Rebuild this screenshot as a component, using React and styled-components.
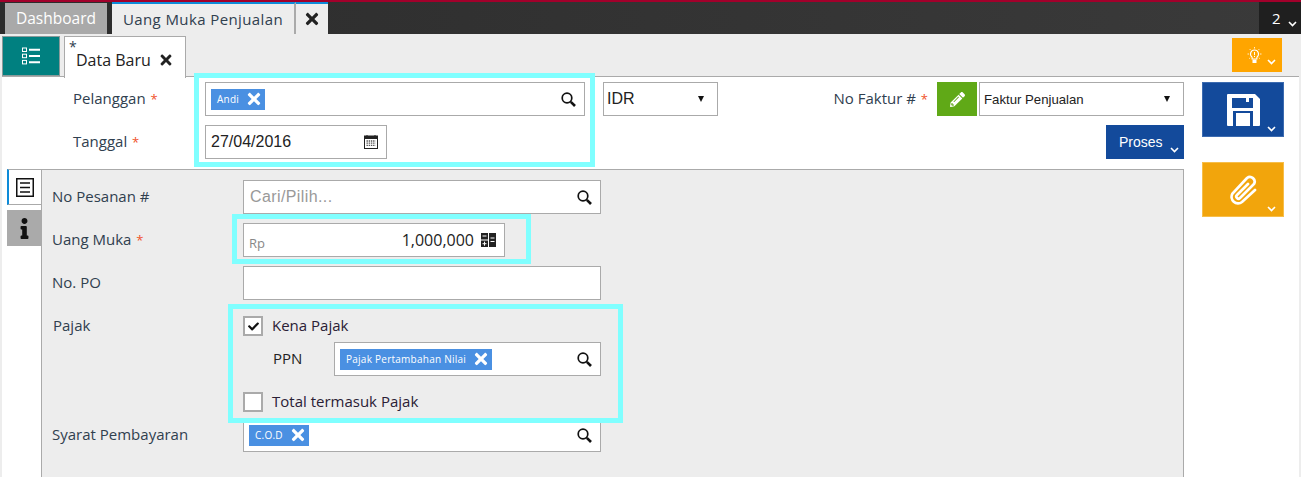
import styled, { createGlobalStyle } from "styled-components";
import { FaTimes, FaPencilAlt, FaInfo, FaCheck } from "react-icons/fa";

const Global = createGlobalStyle`
    html, body {
        margin: 0;
        padding: 0;
        overflow: hidden;
        background: #EDEDED;
    }
    * {
        box-sizing: border-box;
    }
`

const Chevron = ({ color = "#FFFFFF" }) => (
    <svg width="9" height="6" viewBox="0 0 9 6">
        <path d="M1 1 L4.5 4.5 L8 1" fill="none" stroke={color} strokeWidth="1.6" />
    </svg>
)

const SearchIcon = () => (
    <svg width="15" height="15" viewBox="0 0 15 15" fill="none" stroke="#111111">
        <circle cx="6" cy="6" r="4.8" strokeWidth="1.7" />
        <path d="M9.8 9.8 L14 14" strokeWidth="2.6" />
    </svg>
)

const ListIcon = () => (
    <svg width="19" height="18" viewBox="0 0 19 18" fill="none" stroke="#FFFFFF">
        <rect x="0.5" y="1" width="4" height="3.5" strokeWidth="1" />
        <rect x="0.5" y="7.2" width="4" height="3.5" strokeWidth="1" />
        <rect x="0.5" y="13.4" width="4" height="3.5" strokeWidth="1" />
        <path d="M7 2.8 H18 M7 9 H18 M7 15.2 H18" strokeWidth="2" />
    </svg>
)

const BulbIcon = () => (
    <svg width="15" height="17" viewBox="0 0 15 17" fill="none">
        <path d="M7.5 3 a4 4 0 0 1 2.4 7.2 V12 H5.1 V10.2 A4 4 0 0 1 7.5 3 Z" stroke="#FFFFFF" strokeWidth="1.1" />
        <path d="M7.5 5 V8.2 M7.5 9 V10" stroke="#FFFFFF" />
        <rect x="5.5" y="12.6" width="4" height="3.4" fill="#FFFFFF" />
        <path d="M7.5 0 V1.5 M2.6 2 L3.6 3 M12.4 2 L11.4 3 M0.5 7 H2 M13 7 H14.5 M2.2 11.6 L3.2 10.8 M12.8 11.6 L11.8 10.8" stroke="#FFFFFF" strokeWidth="0.8" />
    </svg>
)

const SaveIcon = () => (
    <svg width="33" height="32" viewBox="0 0 33 32">
        <path d="M1 0 H28 L33 5 V31 a1 1 0 0 1 -1 1 H1 a1 1 0 0 1 -1 -1 V1 a1 1 0 0 1 1 -1 Z" fill="#FFFFFF" />
        <rect x="5" y="4" width="21" height="10" fill="#134A9B" />
        <rect x="19" y="4" width="3" height="4" fill="#FFFFFF" />
        <rect x="6" y="17" width="20" height="15" fill="#134A9B" />
        <rect x="9" y="19" width="14" height="13" fill="#FFFFFF" />
    </svg>
)

const ClipIcon = () => (
    <svg width="29" height="32" viewBox="0 0 29 32" fill="none" stroke="#FFFFFF" strokeWidth="2.7" strokeLinecap="round">
        <path d="M26 16 L13 28 A6.5 6.5 0 0 1 3.5 19.5 L18 4 A4.7 4.7 0 0 1 25 10 L11 24 A2 2 0 0 1 8 21 L19 10" />
    </svg>
)

const CalendarIcon = () => (
    <svg width="14" height="14" viewBox="0 0 14 14">
        <rect x="0.5" y="1" width="13" height="12.5" fill="#FFFFFF" stroke="#222222" />
        <rect x="0.5" y="1" width="13" height="3" fill="#222222" />
        <path d="M3 0 V2 M11 0 V2" stroke="#222222" />
        <path d="M2.5 6 H11.5 M2.5 8.2 H11.5 M2.5 10.4 H11.5" stroke="#555555" strokeWidth="1.3" strokeDasharray="1.4 0.8" />
    </svg>
)

const CalculatorIcon = () => (
    <svg width="15" height="14" viewBox="0 0 15 14">
        <rect x="0" y="0" width="7" height="6.5" fill="#222222" />
        <rect x="8" y="0" width="7" height="14" fill="#222222" />
        <rect x="0" y="7.5" width="7" height="6.5" fill="#222222" />
        <path d="M1.5 3 H5.5 M9.5 5 H13.5 M9.5 8.5 H13.5 M1.5 10.7 H5.5 M3.5 8.7 V12.7" stroke="#FFFFFF" strokeWidth="1" />
    </svg>
)

const DocIcon = () => (
    <svg width="18" height="19" viewBox="0 0 18 19" fill="none" stroke="#111111">
        <rect x="0.75" y="0.75" width="16.5" height="17.5" strokeWidth="1.5" />
        <path d="M4 5 H14 M4 9.5 H14 M4 14 H14" strokeWidth="1.4" />
    </svg>
)

function Tag({ children }) {
    return (
        <TagBox>
            <TagText>{children}</TagText>
            <FaTimes size={18} color="#FFFFFF" />
        </TagBox>
    )
}

function Lookup({ width, tag, placeholder }) {
    return (
        <InputBox $width={width}>
            {tag && <Tag>{tag}</Tag>}
            {placeholder && <Placeholder>{placeholder}</Placeholder>}
            <SearchSlot><SearchIcon /></SearchSlot>
        </InputBox>
    )
}

export default function App() {
    return (
        <Page>
            <Global />
            <TopBar>
                <DashboardTab>Dashboard</DashboardTab>
                <ActiveTab>Uang Muka Penjualan</ActiveTab>
                <CloseTab><FaTimes size={18} color="#222222" /></CloseTab>
                <Counter>2<Chevron /></Counter>
            </TopBar>

            <SubBar>
                <ListButton><ListIcon /></ListButton>
                <DocTab>
                    <Star>*</Star>
                    Data Baru
                    <FaTimes size={16} color="#222222" />
                </DocTab>
                <HintButton>
                    <BulbIcon />
                    <Chevron />
                </HintButton>
            </SubBar>

            <Sheet>
                <MainColumn>
                    <HeaderRow>
                        <HeaderLabel>Pelanggan <Req>*</Req></HeaderLabel>
                        <Lookup width={380} tag="Andi" />
                        <SelectBox $width={115} $left={18} $pad={3}>
                            <SelectText $size={16}>IDR</SelectText>
                            <Caret />
                        </SelectBox>
                        <InvoiceGroup>
                            <InvoiceLabel>No Faktur # <Req>*</Req></InvoiceLabel>
                            <GreenButton><FaPencilAlt size={15} color="#FFFFFF" /></GreenButton>
                            <SelectBox $width={205} $pad={4}>
                                <SelectText $size={13.2}>Faktur Penjualan</SelectText>
                                <Caret />
                            </SelectBox>
                        </InvoiceGroup>
                    </HeaderRow>
                    <HeaderRow>
                        <HeaderLabel>Tanggal <Req>*</Req></HeaderLabel>
                        <InputBox $width={182}>
                            <DateText>27/04/2016</DateText>
                            <SearchSlot><CalendarIcon /></SearchSlot>
                        </InputBox>
                        <ProsesButton>Proses <ChevronSlot><Chevron /></ChevronSlot></ProsesButton>
                    </HeaderRow>

                    <TabArea>
                        <SideTabs>
                            <SideTab $active><DocIcon /></SideTab>
                            <SideTab><FaInfo size={21} color="#111111" /></SideTab>
                        </SideTabs>
                        <Panel>
                            <FieldRow>
                                <FieldLabel>No Pesanan #</FieldLabel>
                                <Lookup width={358} placeholder="Cari/Pilih..." />
                            </FieldRow>
                            <FieldRow>
                                <FieldLabel>Uang Muka <Req>*</Req></FieldLabel>
                                <InputBox $width={262}>
                                    <Currency>Rp</Currency>
                                    <Amount>1,000,000</Amount>
                                    <CalculatorIcon />
                                </InputBox>
                            </FieldRow>
                            <FieldRow>
                                <FieldLabel>No. PO</FieldLabel>
                                <InputBox $width={358} />
                            </FieldRow>
                            <TaxRow>
                                <FieldLabel>Pajak</FieldLabel>
                                <TaxFields>
                                    <CheckRow>
                                        <CheckBox><FaCheck size={11} color="#111111" /></CheckBox>
                                        <CheckText>Kena Pajak</CheckText>
                                    </CheckRow>
                                    <PpnRow>
                                        <PpnLabel>PPN</PpnLabel>
                                        <Lookup width={267} tag="Pajak Pertambahan Nilai" />
                                    </PpnRow>
                                    <CheckRow>
                                        <CheckBox />
                                        <CheckText>Total termasuk Pajak</CheckText>
                                    </CheckRow>
                                </TaxFields>
                            </TaxRow>
                            <TermsRow>
                                <FieldLabel>Syarat Pembayaran</FieldLabel>
                                <Lookup width={358} tag="C.O.D" />
                            </TermsRow>
                        </Panel>
                    </TabArea>
                </MainColumn>

                <ActionColumn>
                    <ActionButton $color="#134A9B" $border="#3C6BB0">
                        <SaveIcon />
                        <ActionChevron><Chevron /></ActionChevron>
                    </ActionButton>
                    <ActionButton $color="#F2A50C" $border="#F7BE4A">
                        <ClipIcon />
                        <ActionChevron><Chevron /></ActionChevron>
                    </ActionButton>
                </ActionColumn>
            </Sheet>

            <Highlight $x={194} $y={73} $w={401} $h={94} />
            <Highlight $x={232} $y={214} $w={299} $h={50} />
            <Highlight $x={228} $y={304} $w={395} $h={119} />
        </Page>
    )
}

const Page = styled.div`
    position: relative;
    width: 100%;
    height: 100vh;
    overflow: hidden;
    display: flex;
    flex-direction: column;
    background-color: #EDEDED;
    font-family: 'Open Sans', sans-serif;
    color: #222222;
`

const Highlight = styled.div`
    position: absolute;
    left: ${({ $x }) => $x}px;
    top: ${({ $y }) => $y}px;
    width: ${({ $w }) => $w}px;
    height: ${({ $h }) => $h}px;
    border: 5px solid #80FFFF;
    pointer-events: none;
`

const TopBar = styled.div`
    height: 34px;
    flex-shrink: 0;
    display: flex;
    padding-left: 5px;
    border-top: 2px solid #A2002B;
    background: linear-gradient(to right, #2C2C2C, #3A3A3A);
`

const DashboardTab = styled.div`
    width: 102px;
    margin-top: 1px;
    margin-right: 5px;
    padding-bottom: 2px;
    display: flex;
    align-items: center;
    justify-content: center;
    background-color: #A9A9A9;
    color: #FFFFFF;
    font-size: 15.5px;
`

const ActiveTab = styled.div`
    width: 184px;
    display: flex;
    align-items: center;
    justify-content: center;
    background-color: #EDEDED;
    border-top: 2px solid #0E8BD8;
    border-right: 2px solid #AAAAAA;
    color: #30404F;
    font-size: 15px;
    letter-spacing: 0.4px;
`

const CloseTab = styled.div`
    width: 32px;
    display: flex;
    align-items: center;
    justify-content: center;
    background-color: #EDEDED;
    border-top: 2px solid #0E8BD8;
`

const Counter = styled.div`
    margin-left: auto;
    width: 42px;
    padding-left: 13px;
    display: flex;
    align-items: center;
    gap: 7px;
    background-color: #1F1F1F;
    color: #FFFFFF;
    font-size: 15px;

    svg {
        margin-top: 11px;
    }
`

const SubBar = styled.div`
    height: 43px;
    flex-shrink: 0;
    display: flex;
    align-items: flex-start;
    padding: 2px 19px 0 2px;
`

const ListButton = styled.div`
    width: 58px;
    height: 40px;
    display: flex;
    align-items: center;
    justify-content: center;
    background-color: #008080;
    border: 1px solid #8A9A9A;
`

const DocTab = styled.div`
    position: relative;
    z-index: 1;
    width: 122px;
    height: 42px;
    margin-left: 4px;
    padding: 4px 0 0 11px;
    display: flex;
    align-items: center;
    gap: 7px;
    background-color: #FFFFFF;
    border: 1px solid #AAAAAA;
    border-bottom: none;
    color: #222222;
    font-size: 16px;
`

const Star = styled.span`
    position: absolute;
    left: 4px;
    top: 3px;
    font-size: 14px;
    line-height: 14px;
    color: #30404F;
`

const HintButton = styled.div`
    margin-left: auto;
    margin-top: 2px;
    width: 50px;
    height: 34px;
    padding-left: 15px;
    display: flex;
    align-items: center;
    gap: 5px;
    background-color: #FFA500;

    svg:last-child {
        margin-top: 13px;
    }
`

const Sheet = styled.div`
    flex: 1;
    min-height: 0;
    margin: -1px 2px 0;
    display: flex;
    background-color: #FFFFFF;
    border-top: 1px solid #AAAAAA;
`

const MainColumn = styled.div`
    width: 1182px;
    padding-top: 5px;
    display: flex;
    flex-direction: column;
    gap: 9px;
`

const HeaderRow = styled.div`
    display: flex;
    align-items: center;
    padding-left: 71px;
`

const HeaderLabel = styled.div`
    width: 132px;
    margin-top: -2px;
    font-size: 15px;
    color: #30404F;
`

const Req = styled.span`
    color: #F0522A;
    font-size: 13px;
    margin-left: 1px;
`

const InputBox = styled.div`
    width: ${({ $width }) => $width}px;
    height: 34px;
    flex-shrink: 0;
    display: flex;
    align-items: center;
    padding: 0 8px 0 5px;
    background-color: #FFFFFF;
    border: 1px solid #AAAAAA;
`

const TagBox = styled.div`
    height: 21px;
    display: flex;
    align-items: center;
    gap: 6px;
    padding: 0 2px 0 6px;
    background-color: #4A90E2;
`

const TagText = styled.span`
    color: #FFFFFF;
    font-size: 10px;
    letter-spacing: 0.25px;
`

const Placeholder = styled.span`
    color: #999999;
    font-family: 'Liberation Sans', sans-serif;
    font-size: 16px;
    letter-spacing: 0.4px;
    margin-left: 1px;
`

const SearchSlot = styled.span`
    margin-left: auto;
    display: flex;
`

const SelectBox = styled.div`
    width: ${({ $width }) => $width}px;
    height: 34px;
    margin-left: ${({ $left }) => $left || 0}px;
    display: flex;
    align-items: center;
    justify-content: space-between;
    padding: 0 13px 0 ${({ $pad }) => $pad}px;
    background-color: #FFFFFF;
    border: 1px solid #AAAAAA;
`

const SelectText = styled.span`
    font-family: 'Liberation Sans', sans-serif;
    font-size: ${({ $size }) => $size}px;
    color: #222222;
`

const Caret = styled.span`
    width: 0;
    height: 0;
    border-left: 3.5px solid transparent;
    border-right: 3.5px solid transparent;
    border-top: 6px solid #111111;
`

const InvoiceGroup = styled.div`
    margin-left: auto;
    display: flex;
    align-items: center;
`

const InvoiceLabel = styled.div`
    margin: -2px 9px 0 0;
    font-size: 15px;
    color: #30404F;
`

const GreenButton = styled.div`
    width: 40px;
    height: 34px;
    margin-right: 2px;
    display: flex;
    align-items: center;
    justify-content: center;
    background-color: #60A917;
`

const DateText = styled.span`
    font-family: 'Liberation Sans', sans-serif;
    font-size: 16px;
    color: #222222;
`

const ProsesButton = styled.div`
    position: relative;
    margin-left: auto;
    width: 78px;
    height: 34px;
    display: flex;
    align-items: center;
    padding-left: 13px;
    background-color: #134A9B;
    color: #FFFFFF;
    font-family: 'Liberation Sans', sans-serif;
    font-size: 14px;
`

const ChevronSlot = styled.span`
    position: absolute;
    right: 5px;
    bottom: 6px;
    display: flex;
`

const TabArea = styled.div`
    flex: 1;
    display: flex;
    margin-top: 1px;
    padding-left: 5px;
`

const SideTabs = styled.div`
    width: 34px;
    display: flex;
    flex-direction: column;
    gap: 5px;
`

const SideTab = styled.div`
    height: 36px;
    display: flex;
    align-items: center;
    justify-content: center;
    background-color: ${({ $active }) => ($active ? "#FFFFFF" : "#AAAAAA")};
    border-left: ${({ $active }) => ($active ? "2px solid #0E8BD8" : "none")};
    border-bottom: ${({ $active }) => ($active ? "1px solid #AAAAAA" : "none")};
    border-top: ${({ $active }) => ($active ? "1px solid #AAAAAA" : "none")};
`

const Panel = styled.div`
    flex: 1;
    display: flex;
    flex-direction: column;
    padding: 10px 0 0 10px;
    background-color: #EDEDED;
    border: 1px solid #AAAAAA;
    border-bottom: none;
`

const FieldRow = styled.div`
    display: flex;
    align-items: center;
    margin-bottom: 9px;
`

const FieldLabel = styled.div`
    width: 191px;
    flex-shrink: 0;
    margin-top: -2px;
    font-size: 15px;
    color: #30404F;
`

const TaxRow = styled.div`
    display: flex;
    align-items: flex-start;
    margin-top: 7px;

    ${FieldLabel} {
        margin-top: -1px;
        padding-left: 1px;
    }
`

const TaxFields = styled.div`
    display: flex;
    flex-direction: column;
`

const CheckRow = styled.div`
    height: 20px;
    display: flex;
    align-items: center;
    gap: 9px;
`

const CheckText = styled.span`
    margin-top: -2px;
    font-size: 15px;
    color: #2A2035;
`

const CheckBox = styled.span`
    width: 20px;
    height: 20px;
    display: flex;
    align-items: center;
    justify-content: center;
    background-color: #FFFFFF;
    border: 2px solid #AAAAAA;
`

const PpnRow = styled.div`
    display: flex;
    align-items: center;
    margin: 6px 0 16px;
`

const PpnLabel = styled.div`
    width: 91px;
    margin-top: -3px;
    padding-left: 30px;
    font-size: 15px;
    color: #222222;
`

const TermsRow = styled(FieldRow)`
    margin-top: 6px;
`

const Currency = styled.span`
    margin-top: 5px;
    color: #888888;
    font-size: 13px;
`

const Amount = styled.span`
    margin-left: auto;
    margin-right: 7px;
    color: #222222;
    font-size: 16px;
`

const ActionColumn = styled.div`
    display: flex;
    flex-direction: column;
    gap: 25px;
    padding: 5px 0 0 18px;
`

const ActionButton = styled.div`
    position: relative;
    width: 82px;
    height: 55px;
    display: flex;
    align-items: center;
    justify-content: center;
    background-color: ${({ $color }) => $color};
    border: 1px solid ${({ $border }) => $border};
`

const ActionChevron = styled.span`
    position: absolute;
    right: 7px;
    bottom: 4px;
    display: flex;
`
